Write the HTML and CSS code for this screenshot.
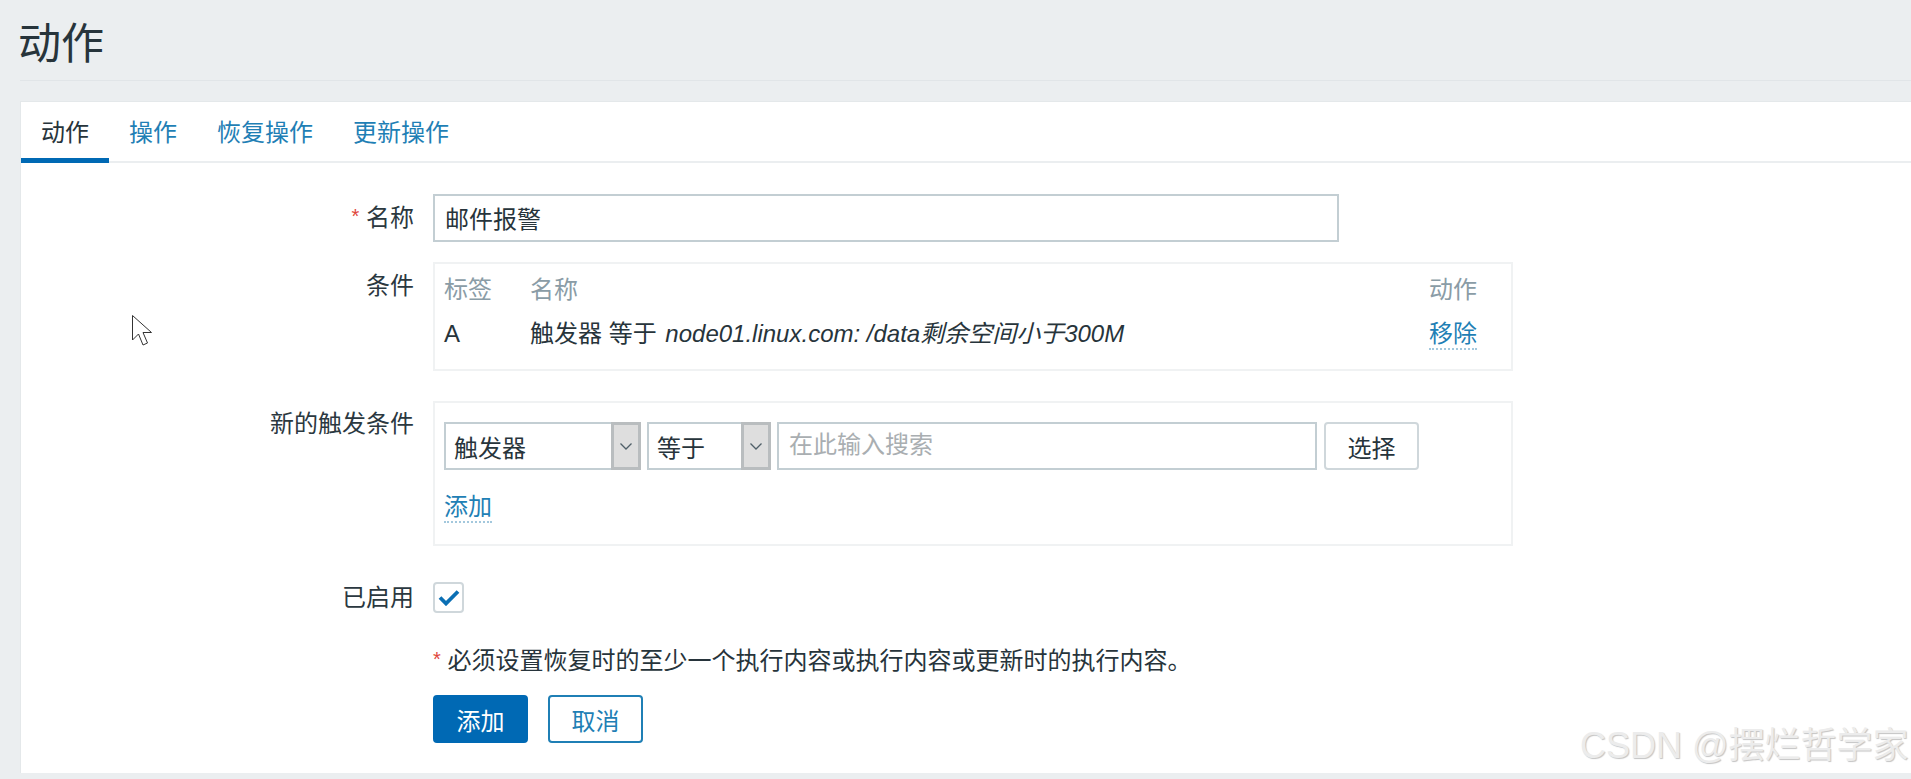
FILE: index.html
```html
<!DOCTYPE html>
<html lang="zh-CN">
<head>
<meta charset="utf-8">
<title>动作</title>
<link rel="stylesheet" href="styles.css">
</head>
<body>
<main class="page">
  <header class="page-header"><h1>动作</h1></header>
  <section class="card">
    <nav class="tabs">
      <a class="tab tab-active">动作</a>
      <a class="tab">操作</a>
      <a class="tab">恢复操作</a>
      <a class="tab">更新操作</a>
    </nav>
    <form class="form">
      <div class="row row-name">
        <label class="label label-name"><span class="req">*</span> 名称</label>
        <input class="text-input name-input" type="text" value="邮件报警">
      </div>
      <div class="row row-cond">
        <div class="label label-cond">条件</div>
        <div class="box cond-box">
          <div class="cond-grid">
            <div class="th">标签</div><div class="th">名称</div><div class="th">动作</div>
            <div class="td">A</div>
            <div class="td">触发器 等于 <em class="trigger-name">node01.linux.com: /data剩余空间小于300M</em></div>
            <div class="td"><a class="link">移除</a></div>
          </div>
        </div>
      </div>
      <div class="row row-new">
        <div class="label">新的触发条件</div>
        <div class="box new-box">
          <div class="controls">
            <div class="select select-a"><span class="select-text">触发器</span><span class="select-arrow"><svg width="14" height="9" viewBox="0 0 14 9"><path d="M1.500 1.500 7 7l5.500-5.500" fill="none" stroke="#4f5f68" stroke-width="1.300"/></svg></span></div>
            <div class="select select-b"><span class="select-text">等于</span><span class="select-arrow"><svg width="14" height="9" viewBox="0 0 14 9"><path d="M1.500 1.500 7 7l5.500-5.500" fill="none" stroke="#4f5f68" stroke-width="1.300"/></svg></span></div>
            <input class="text-input search-input" type="text" placeholder="在此输入搜索">
            <button class="btn btn-select" type="button">选择</button>
          </div>
          <a class="link add-link">添加</a>
        </div>
      </div>
      <div class="row row-enabled">
        <div class="label label-short">已启用</div>
        <span class="checkbox"><svg width="22" height="17" viewBox="0 0 22 17"><path d="M2 8.500 8 14.500 20 2.500" fill="none" stroke="#0a6fb4" stroke-width="3.800"/></svg></span>
      </div>
      <div class="row row-note">
        <div></div>
        <p class="note"><span class="req">*</span> 必须设置恢复时的至少一个执行内容或执行内容或更新时的执行内容。</p>
      </div>
      <div class="row row-actions">
        <div></div>
        <div class="actions">
          <button class="btn btn-primary" type="button">添加</button>
          <button class="btn btn-outline" type="button">取消</button>
        </div>
      </div>
    </form>
  </section>
</main>
<svg class="cursor" width="22" height="33" viewBox="0 0 22 33"><path d="M1.500 1.500V26l6-6 4.500 11 4.500-2-4.500-10.500H20.500Z" fill="#fff" stroke="#333" stroke-width="1" stroke-linejoin="round"/></svg>
<div class="watermark">CSDN @摆烂哲学家</div>
</body>
</html>
```
FILE: styles.css
```css
* { box-sizing: border-box; }
html, body { margin: 0; height: 100%; }
body {
  background: #ebeef0;
  color: #27343b;
  font-family: "Liberation Sans", "Noto Sans CJK SC", sans-serif;
  font-size: 24px;
  overflow: hidden;
}
.page { height: 773px; padding-left: 20px; display: flex; flex-direction: column; }
.page-header { height: 81px; border-bottom: 1px solid #e1e5e8; padding-top: 22px; }
.page-header h1 { margin: 0 0 0 -2px; font-size: 43px; line-height: 44px; font-weight: 400; }
.card {
  flex: 1;
  margin-top: 20px;
  background: #fff;
  border: 1px solid #e4e8ea;
  border-right: 0;
  border-bottom: 0;
}
.tabs { display: flex; height: 61px; border-bottom: 2px solid #ebeef0; }
.tab { padding: 16px 20px 0; line-height: 30px; color: #1f7fb5; height: 61px; }
.tab-active { color: #27343b; border-bottom: 5px solid #0069b4; }
.form { padding-top: 31px; }
.row { display: grid; grid-template-columns: 393px 1fr; column-gap: 19px; }
.label { text-align: right; line-height: 46px; color: #2b3840; }
.label-name { line-height: 44px; }
.label-cond { line-height: 48px; }
.label-short { line-height: 31px; }
.req { color: #e0463c; font-size: 20px; vertical-align: 3px; }
.text-input {
  height: 48px;
  border: 2px solid #c3ced3;
  background: #fff;
  color: #27343b;
  font: inherit;
  padding: 0 10px;
  outline: 0;
  border-radius: 0;
}
.text-input::placeholder { color: #a9aeb1; opacity: 1; }
.name-input { width: 906px; padding-bottom: 2px; }
.row-cond { margin-top: 20px; }
.box { width: 1080px; border: 2px solid #f0f2f3; }
.cond-box { height: 109px; padding: 10px 0 0 9px; }
.cond-grid { display: grid; grid-template-columns: 86px 1fr 82px; }
.th { color: #8a9ca6; line-height: 32px; }
.td { line-height: 32px; margin-top: 12px; }
.trigger-name { font-style: italic; margin-left: 2px; }
.link { color: #1f7fb5; border-bottom: 2px dotted #a3c8dd; display: inline-block; line-height: 29px; white-space: nowrap; }
.row-new { margin-top: 30px; }
.new-box { height: 145px; padding: 19px 0 0 9px; }
.controls { display: flex; height: 48px; }
.select {
  display: flex;
  justify-content: space-between;
  border: 2px solid #c3ced3;
  background: #fff;
  height: 48px;
}
.select-a { width: 197px; }
.select-b { width: 124px; margin-left: 6px; }
.select-text { padding: 7px 0 0 8px; line-height: 36px; }
.select-arrow {
  width: 30px;
  margin: -2px -2px -2px 0;
  background: #dedede;
  border: 3px solid #b9bdbf;
  display: flex;
  align-items: center;
  justify-content: center;
}
.search-input { width: 540px; margin-left: 6px; padding-bottom: 2px; }
.btn {
  font: inherit;
  height: 48px;
  border-radius: 4px;
  padding: 0;
  background: #fff;
  color: #27343b;
  border: 2px solid #cfd7db;
  cursor: pointer;
}
.btn-select { width: 95px; margin-left: 7px; }
.add-link { margin-top: 22px; display: block; width: 48px; }
.row-enabled { margin-top: 36px; height: 31px; }
.checkbox {
  width: 31px;
  height: 31px;
  border: 2px solid #cfd7db;
  border-radius: 4px;
  display: flex;
  align-items: center;
  justify-content: center;
}
.row-note { margin-top: 31px; }
.note { margin: 0; line-height: 30px; }
.row-actions { margin-top: 19px; }
.actions { display: flex; gap: 20px; }
.btn-primary { width: 95px; background: #0069b4; border-color: #0069b4; color: #fff; }
.btn-outline { width: 95px; color: #1f7fb5; border-color: #1f7fb5; }
.cursor { position: absolute; left: 131px; top: 314px; }
.watermark {
  position: absolute;
  left: 1580px;
  top: 724px;
  line-height: 44px;
  font-size: 36px;
  color: #ececec;
  text-shadow: 1px 1px 1px #c4c4c4;
  white-space: nowrap;
}
```
